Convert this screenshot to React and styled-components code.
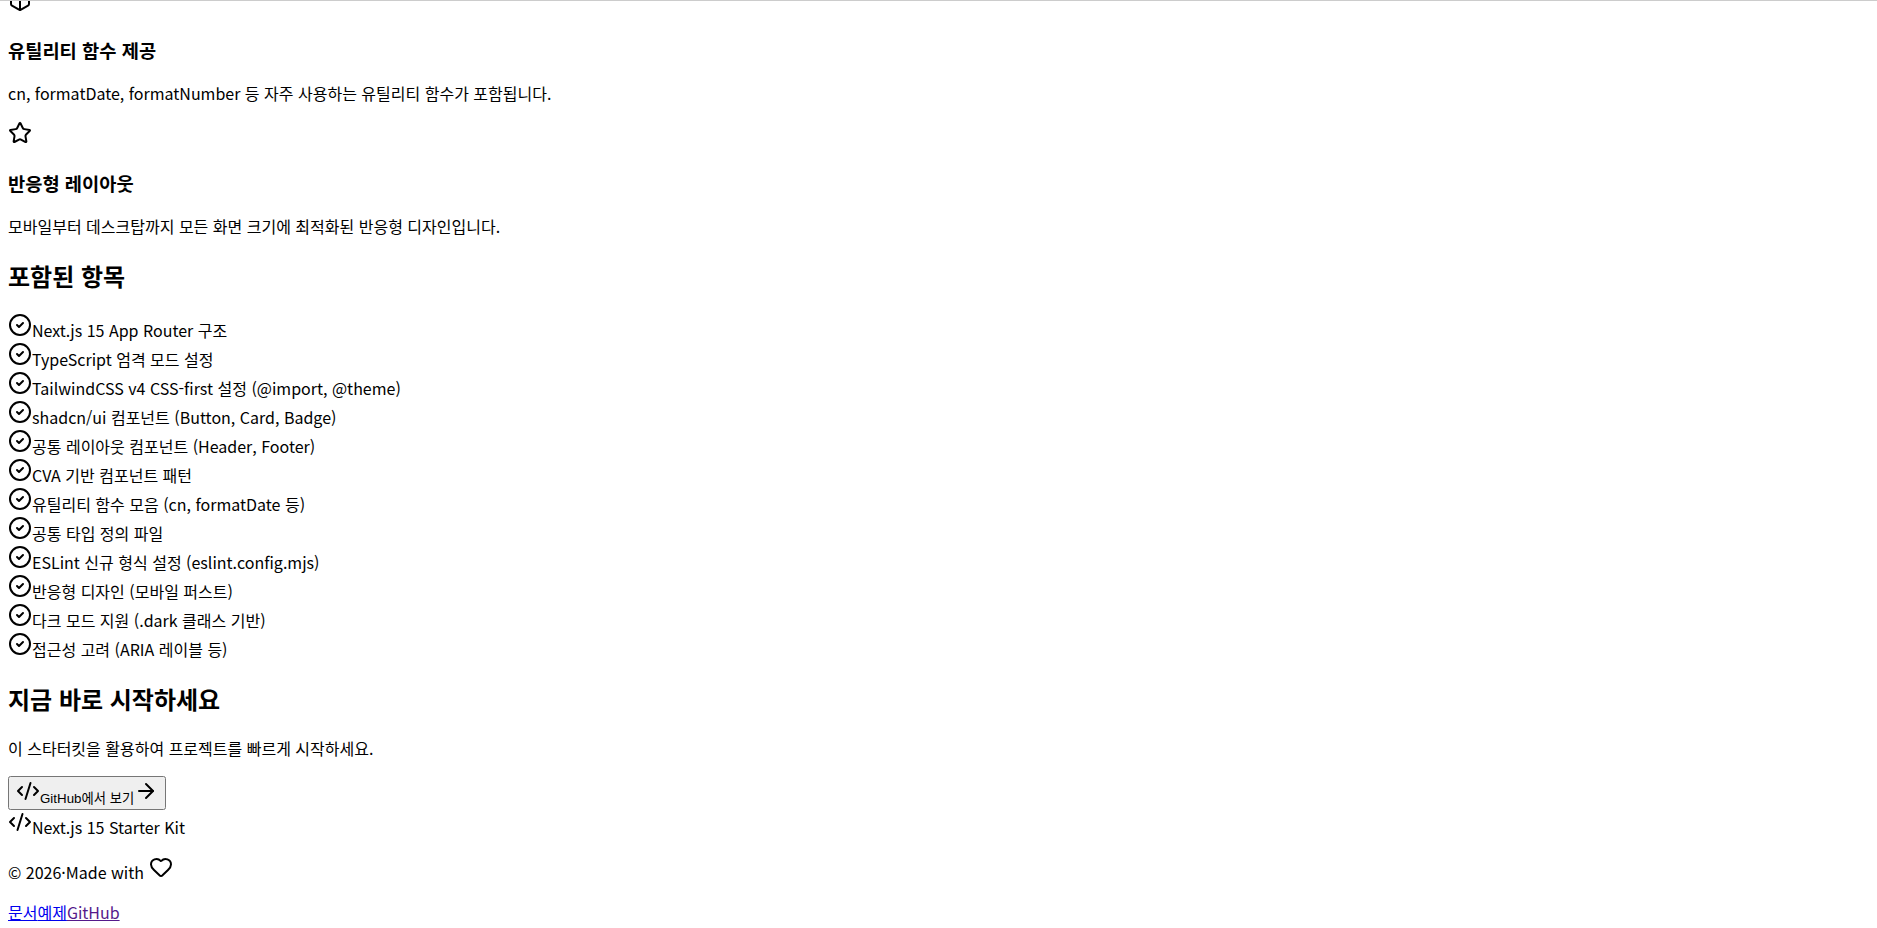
import React from "react";
import styled, { createGlobalStyle } from "styled-components";
import { Box, Star, CircleCheck, CodeXml, ArrowRight, Heart } from "lucide-react";

const Global = createGlobalStyle`
  body {
    margin: 0;
    background: #fff;
    color: #000;
    font-family: "Noto Sans CJK KR", sans-serif;
    font-size: 16px;
  }
`;

/* The window shows the lower part of the page, already scrolled. */
const Viewport = styled.div`
  box-sizing: border-box;
  height: 100vh;
  overflow: hidden;
  border-top: 1px solid #ccc;
  padding: 0 8px;
`;

const Page = styled.div`
  margin-top: -13px;
`;

const Feature = styled.article`
  margin: 0;
`;

const FeatureTitle = styled.h3`
  margin: 19px 0 18px;
  line-height: 27px;
`;

const Heading = styled.h2`
  margin: 20px 0;
  font-size: 24px;
  line-height: 35px;
`;

const Text = styled.p`
  margin: 16px 0;
`;

const List = styled.ul`
  list-style: none;
  margin: 0;
  padding: 0;
`;

const Item = styled.li`
  line-height: 24px;
`;

const Cta = styled.button`
  font-family: "Liberation Sans", "Noto Sans CJK KR", sans-serif;
`;

const Brand = styled.div`
  margin: 0;
`;

const FooterLink = styled.a`
  color: ${(p) => (p.$visited ? "#551a8b" : "#0000ee")};
`;

const features = [
  [Box, "유틸리티 함수 제공", "cn, formatDate, formatNumber 등 자주 사용하는 유틸리티 함수가 포함됩니다."],
  [Star, "반응형 레이아웃", "모바일부터 데스크탑까지 모든 화면 크기에 최적화된 반응형 디자인입니다."],
];

const items = [
  "Next.js 15 App Router 구조",
  "TypeScript 엄격 모드 설정",
  "TailwindCSS v4 CSS-first 설정 (@import, @theme)",
  "shadcn/ui 컴포넌트 (Button, Card, Badge)",
  "공통 레이아웃 컴포넌트 (Header, Footer)",
  "CVA 기반 컴포넌트 패턴",
  "유틸리티 함수 모음 (cn, formatDate 등)",
  "공통 타입 정의 파일",
  "ESLint 신규 형식 설정 (eslint.config.mjs)",
  "반응형 디자인 (모바일 퍼스트)",
  "다크 모드 지원 (.dark 클래스 기반)",
  "접근성 고려 (ARIA 레이블 등)",
];

export default function App() {
  return (
    <Viewport lang="ko">
      <Global />
      <Page>
        <main>
          {features.map(([Icon, title, text]) => (
            <Feature key={title}>
              <Icon />
              <FeatureTitle>{title}</FeatureTitle>
              <Text>{text}</Text>
            </Feature>
          ))}
          <Heading>포함된 항목</Heading>
          <List>
            {items.map((label) => (
              <Item key={label}>
                <CircleCheck />
                <span>{label}</span>
              </Item>
            ))}
          </List>
          <Heading>지금 바로 시작하세요</Heading>
          <Text>이 스타터킷을 활용하여 프로젝트를 빠르게 시작하세요.</Text>
          <Cta type="button">
            <CodeXml />
            GitHub에서 보기
            <ArrowRight />
          </Cta>
        </main>
        <footer>
          <Brand>
            <CodeXml />
            <span>Next.js 15 Starter Kit</span>
          </Brand>
          <Text>
            © 2026·Made with <Heart />
          </Text>
          <nav>
            <FooterLink href="#docs">문서</FooterLink>
            <FooterLink href="#examples">예제</FooterLink>
            <FooterLink $visited href="#github">GitHub</FooterLink>
          </nav>
        </footer>
      </Page>
    </Viewport>
  );
}
